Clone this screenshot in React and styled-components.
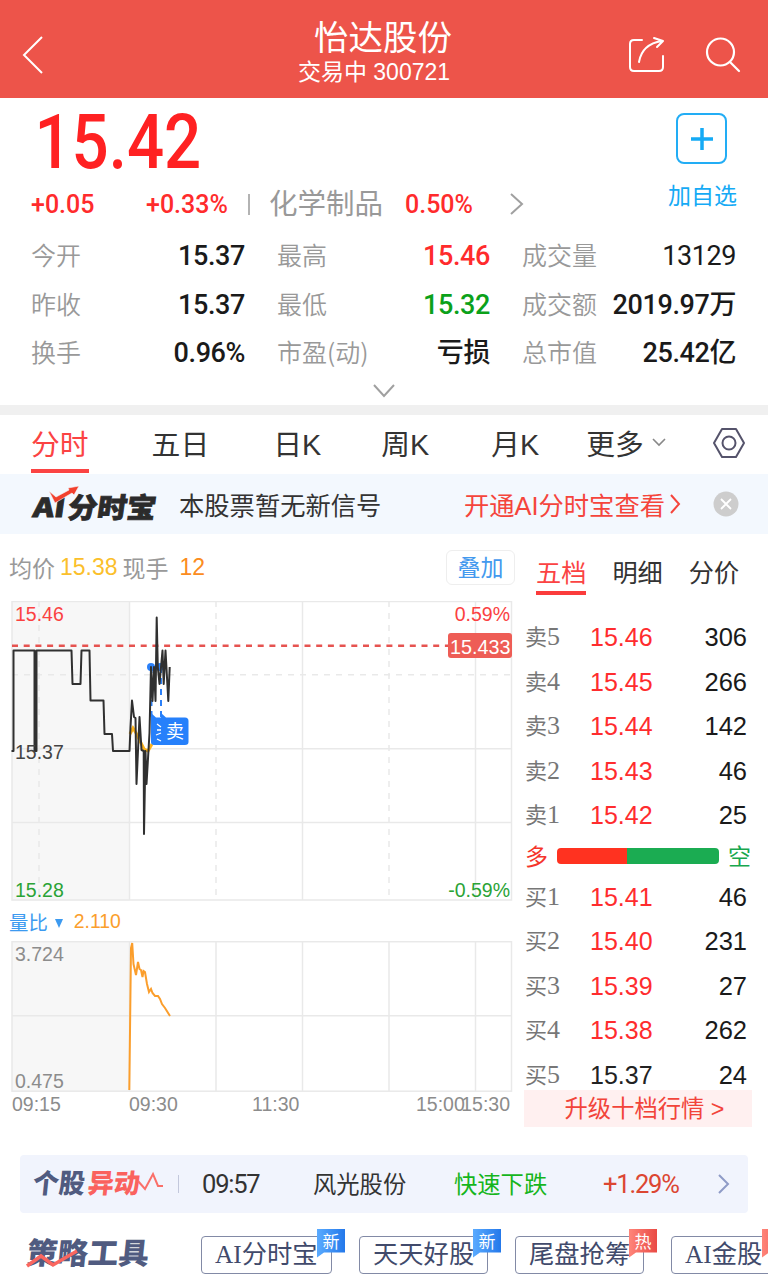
import React from "react";
import styled, { createGlobalStyle } from "styled-components";

const cjk = `"Noto Sans CJK SC", sans-serif`;
const arial = `"Liberation Sans", "Noto Sans CJK SC", sans-serif`;
const din = `Roboto, "Noto Sans CJK SC", sans-serif`;
const serif = `"Liberation Serif", "Noto Sans CJK SC", serif`;

const GlobalStyle = createGlobalStyle`
  * {
    box-sizing: border-box;
  }
  body {
    margin: 0;
    background: #ffffff;
    font-family: ${cjk};
    overflow: hidden;
  }
`;

const Page = styled.div`
  width: 768px;
  height: 1282px;
  overflow: hidden;
  background: #ffffff;
  white-space: nowrap;
`;

/* header */
const Header = styled.header`
  display: flex;
  align-items: center;
  justify-content: space-between;
  height: 98px;
  padding: 12px 27px 0 22px;
  background: #ed544a;
  color: #ffffff;
`;
const HeaderSide = styled.div`
  display: flex;
  align-items: center;
  justify-content: ${(p) => (p.$end ? "flex-end" : "flex-start")};
  gap: 39px;
  width: 150px;
`;
const Heading = styled.div`
  text-align: center;
  margin: -7px -3px 0 0;
`;
const StockName = styled.h1`
  margin: 0;
  font-size: 34.5px;
  font-weight: 400;
  line-height: 40px;
`;
const StockStatus = styled.div`
  margin-left: -18px;
  font-family: ${arial};
  font-size: 23px;
  line-height: 34px;
`;

/* quote */
const Quote = styled.section`
  display: flex;
  justify-content: space-between;
  height: 134px;
  padding: 0 31px;
`;
const Price = styled.div`
  height: 88px;
  padding-left: 4px;
  color: #ff2122;
  font-family: ${din};
  font-size: 76px;
  font-weight: 500;
  line-height: 89px;
  transform: scaleX(0.86);
  transform-origin: left;
`;
const ChangeRow = styled.div`
  display: flex;
  align-items: center;
  height: 36px;
`;
const Change = styled.div`
  width: ${(p) => p.$width}px;
  color: #ff2b2c;
  font-family: ${din};
  font-size: 25px;
  font-weight: 500;
  letter-spacing: ${(p) => p.$spacing || 0}px;
`;
const Bar = styled.div`
  width: 2px;
  height: 21px;
  margin: 0 19px 0 0;
  background: #b3b3b3;
`;
const Industry = styled.div`
  width: 136px;
  padding-bottom: 4px;
  color: #999999;
  font-size: 28.5px;
  line-height: 36px;
`;
const AddBox = styled.div`
  display: flex;
  flex-direction: column;
  align-items: center;
  padding-top: 15px;
  color: #15aaf5;
  font-size: 23px;
`;
const AddButton = styled.button`
  display: flex;
  align-items: center;
  justify-content: center;
  width: 51px;
  height: 51px;
  margin: 0 2px 13px 0;
  padding: 0;
  border: 2px solid #22adf5;
  border-radius: 8px;
  background: #ffffff;
`;

const Stats = styled.section`
  display: grid;
  grid-template-columns: 214px 213px 214px;
  column-gap: 32px;
  grid-auto-rows: 48.5px;
  padding-left: 31px;
`;
const Stat = styled.div`
  display: flex;
  align-items: center;
  justify-content: space-between;
`;
const StatLabel = styled.span`
  padding-bottom: 4px;
  color: #999999;
  font-size: 25px;
  font-weight: 350;
`;
const StatValue = styled.span`
  color: ${(p) => p.$color || "#1a1a1a"};
  font-family: ${din};
  font-size: 27px;
  font-weight: ${(p) => p.$weight || 500};
  letter-spacing: -0.4px;
  line-height: 32px;
`;
const Expand = styled.div`
  display: flex;
  justify-content: center;
  height: 27px;
  padding-top: 6px;
`;
const Divider = styled.div`
  height: 10px;
  background: #f0f0f0;
`;

/* period tabs */
const Tabs = styled.nav`
  display: flex;
  height: 59px;
  padding-left: 31px;
`;
const Tab = styled.div`
  display: flex;
  align-items: center;
  height: 58px;
  margin-right: ${(p) => p.$gap}px;
  padding: 2px 0 0;
  border-bottom: 4px solid ${(p) => (p.$active ? "#fb4343" : "transparent")};
  color: ${(p) => (p.$active ? "#fb4343" : "#333333")};
  font-family: ${arial};
  font-size: 28.8px;

  svg {
    margin-left: 8px;
  }
`;

const Banner = styled.section`
  display: flex;
  align-items: center;
  height: 60px;
  padding-left: 31px;
  background: #f3f8fe;
  font-family: ${arial};
  font-size: 25.3px;
`;
const BannerText = styled.div`
  width: 285px;
  margin-left: 21px;
  color: #333333;
`;
const BannerLink = styled.div`
  display: flex;
  align-items: center;
  gap: 5px;
  width: 249px;
  color: #f5453c;
`;

/* charts */
const Main = styled.main`
  display: flex;
  height: 621px;
`;
const ChartColumn = styled.div`
  width: 524px;
`;
const ChartHead = styled.div`
  display: flex;
  align-items: center;
  height: 67px;
  padding: 0 9px;
  color: #999999;
  font-family: ${arial};
  font-size: 23px;
`;
const HeadValue = styled.span`
  margin: 0 ${(p) => p.$right}px 0 ${(p) => p.$left}px;
  color: ${(p) => p.$color};
`;
const OverlayButton = styled.button`
  width: 69px;
  height: 35px;
  margin-left: auto;
  padding: 0 0 2px;
  border: 1.5px solid #eeeeee;
  border-radius: 6px;
  background: #ffffff;
  color: #4399ee;
  font-family: ${cjk};
  font-size: 23px;
  line-height: 30px;
`;
const Chart = styled.svg`
  display: block;
  font-family: ${arial};
  font-size: 19.5px;
`;
const VolumeHead = styled.div`
  display: flex;
  align-items: center;
  height: 40px;
  padding: 2px 0 0 9px;
  color: #3c9af0;
  font-family: ${arial};
  font-size: 19.4px;

  svg {
    margin: 3px 11px 0 7px;
  }
`;

/* order book */
const Book = styled.aside`
  width: 228px;
`;
const BookTabs = styled.div`
  display: flex;
  gap: 26px;
  height: 61px;
  padding: 16px 0 0 12px;
  margin-bottom: 21px;
`;
const BookTab = styled.div`
  height: 45px;
  border-bottom: 4px solid ${(p) => (p.$active ? "#fb3c3c" : "transparent")};
  color: ${(p) => (p.$active ? "#fb4343" : "#333333")};
  font-size: 25.2px;
  line-height: 43px;
`;
const Order = styled.div`
  display: flex;
  align-items: center;
  height: 44.5px;
  padding: 0 5px 0 1px;
  font-family: ${arial};
  font-size: 25px;
`;
const OrderLabel = styled.span`
  width: 65px;
  padding-bottom: 4px;
  color: #777777;
  font-family: ${serif};
  font-size: 22px;
`;
const LabelDigit = styled.span`
  font-size: 26px;
`;
const OrderPrice = styled.span`
  color: ${(p) => (p.$flat ? "#222222" : "#ff2c2e")};
`;
const OrderQty = styled.span`
  margin-left: auto;
  color: #1a1a1a;
  font-size: 25.5px;
`;
const Balance = styled.div`
  display: flex;
  align-items: center;
  justify-content: space-between;
  height: 37px;
  padding: 0 1px 2px;
  color: #18a74e;
  font-size: 23px;
`;
const BalanceMark = styled.span`
  padding-bottom: 2px;
  color: ${(p) => p.$color};
`;
const BalanceBar = styled.div`
  width: 162px;
  height: 16px;
  border-radius: 4px;
  background: linear-gradient(90deg, #ff3220 43%, #1bac52 43%);
`;
const Upgrade = styled.div`
  height: 37px;
  margin-top: -8px;
  padding-left: 13px;
  background: #fff0f0;
  color: #f2443a;
  font-family: ${arial};
  font-size: 23.3px;
  line-height: 39px;
  text-align: center;
`;

/* movers */
const Movers = styled.section`
  display: flex;
  align-items: center;
  width: 728px;
  height: 58px;
  margin: 0 20px;
  padding-left: 13px;
  border-radius: 4px;
  background: #f1f4fd;
`;
const Mover = styled.div`
  width: ${(p) => p.$width}px;
  padding-bottom: 2px;
  color: ${(p) => p.$color || "#333333"};
  font-size: 23.3px;
`;
const MoverNumber = styled(Mover)`
  padding-bottom: 0;
  font-family: ${din};
  font-size: 25.5px;
  font-weight: 450;
  letter-spacing: -1.2px;
`;
const MoverBar = styled.div`
  width: 1px;
  height: 18px;
  margin: 0 23px 0 14px;
  background: #c3c8dc;
`;

/* strategy tools */
const Tools = styled.section`
  display: flex;
  height: 69px;
  padding: 15px 0 0 26px;
`;
const ToolLogo = styled.div`
  flex: none;
  width: 175px;
  padding-top: 3px;
`;
const Tool = styled.div`
  position: relative;
  flex: none;
  width: ${(p) => p.$width}px;
  height: 38px;
  margin: 8px 27px 0 0;
  padding-left: 13px;
  border: 1.5px solid #828aa6;
  border-radius: 4px;
  color: #414a6b;
  font-family: ${serif};
  font-size: 25.3px;
  line-height: 34px;
`;
const Badge = styled.span`
  position: absolute;
  top: -8px;
  right: -14px;
  width: 28px;
  height: 29px;
  background: ${(p) =>
    p.$hot
      ? "linear-gradient(90deg, #ff857a, #e94a44)"
      : "linear-gradient(90deg, #5aabff, #2478ea)"};
  clip-path: polygon(0 0, 100% 0, 100% 83%, 25% 83%, 0 100%);
  color: #ffffff;
  font-family: ${cjk};
  font-size: 17px;
  line-height: 23px;
  text-align: center;
`;

const stats = [
  ["今开", "15.37"],
  ["最高", "15.46", "#ff2b2c"],
  ["成交量", "13129", "#1a1a1a", 400],
  ["昨收", "15.37"],
  ["最低", "15.32", "#0ba11a"],
  ["成交额", "2019.97万"],
  ["换手", "0.96%"],
  ["市盈(动)", "亏损"],
  ["总市值", "25.42亿"],
];

const periods = [
  ["分时", 63],
  ["五日", 64],
  ["日K", 60],
  ["周K", 62],
  ["月K", 47],
];

const sells = [
  ["5", "15.46", 306],
  ["4", "15.45", 266],
  ["3", "15.44", 142],
  ["2", "15.43", 46],
  ["1", "15.42", 25],
];

const buys = [
  ["1", "15.41", 46],
  ["2", "15.40", 231],
  ["3", "15.39", 27],
  ["4", "15.38", 262],
  ["5", "15.37", 24],
];

const tools = [
  ["AI分时宝", 131, "新"],
  ["天天好股", 129, "新"],
  ["尾盘抢筹", 129, "热"],
  ["AI金股", 106, "热"],
];

const Chevron = ({ w, h, d, color, stroke = 2 }) => (
  <svg width={w} height={h} fill="none" stroke={color} strokeWidth={stroke}>
    <path d={d} />
  </svg>
);

const ShareIcon = () => (
  <svg width="38" height="38" fill="none" stroke="#fff" strokeWidth="2" strokeLinecap="round" strokeLinejoin="round">
    <path d="M14 4H6Q2 4 2 8V31Q2 35 6 35H31Q35 35 35 31V20" />
    <path d="M11 26C13 14 21 7 34 5M26 2L35 5L29 11" />
  </svg>
);

const SearchIcon = () => (
  <svg width="36" height="38" fill="none" stroke="#fff" strokeWidth="2.2" strokeLinecap="round">
    <circle cx="15.5" cy="16" r="13.5" />
    <path d="M25 26L34 35" />
  </svg>
);

const AiLogo = () => (
  <svg width="127" height="42" viewBox="0 0 127 42" overflow="visible">
    <g
      transform="translate(1 34) skewX(-8)"
      fill="#2b2b2b"
      stroke="#2b2b2b"
      strokeWidth="0.8"
      fontFamily={cjk}
      fontWeight="900"
    >
      <text fontSize="26" textLength="32" lengthAdjust="spacingAndGlyphs">AI</text>
      <text x="35" y="1" fontSize="28" textLength="88" lengthAdjust="spacingAndGlyphs">分时宝</text>
    </g>
    <path d="M18 8L25 14L38 7L37 5L48 3L43 12L41 10L24 20Z" fill="#f2402d" stroke="#f3f8fe" strokeWidth="0.6" />
  </svg>
);

const MoversLogo = () => (
  <svg width="131" height="42" viewBox="0 0 131 42" overflow="visible">
    <g transform="translate(-1 30) skewX(-6)" fontFamily={cjk} fontWeight="900" fontSize="27">
      <text fill="#505b80" textLength="52" lengthAdjust="spacingAndGlyphs">个股</text>
      <text x="55" fill="#fa625e" textLength="52" lengthAdjust="spacingAndGlyphs">异动</text>
    </g>
    <path d="M105 18L112 26L120 11L125 23H130" fill="none" stroke="#fa6f69" strokeWidth="2" />
  </svg>
);

const ToolsLogo = () => (
  <svg width="128" height="44" viewBox="0 0 128 44" overflow="visible">
    <g transform="translate(0 33) skewX(-6)">
      <text fill="#505b80" fontFamily={cjk} fontWeight="900" fontSize="30" textLength="122" lengthAdjust="spacingAndGlyphs">
        策略工具
      </text>
    </g>
    <path d="M1 35L15 25L27 34L51 20" fill="none" stroke="#fa665f" strokeWidth="3.5" />
  </svg>
);

const PriceChart = () => (
  <Chart width="524" height="300" viewBox="0 601 524 300">
    <rect x="12" y="601.5" width="117.5" height="299" fill="#f7f7f7" />
    <g fill="none" stroke="#e9e9e9" strokeWidth="1.5">
      <rect x="12" y="601.5" width="499.5" height="298.5" />
      <path d="M129.5 601V900M302.5 601V900M475.5 601V900M12 748.7H511M12 822.5H511" />
      <path d="M39 601V900M216 601V900M389 601V900M12 674.7H511" strokeDasharray="6 6" />
    </g>
    <path d="M12 645.7H450" stroke="#e65350" strokeWidth="2.5" strokeDasharray="6 5.7" />
    <path d="M130 734L133 728L136 733L140 741L144 749L148 751L152 744" fill="none" stroke="#fdb31b" strokeWidth="3" />
    <g stroke="#2b80f8" strokeWidth="2" strokeDasharray="6 5">
      <path d="M151.5 667V718M161 667V718" />
    </g>
    <circle cx="151" cy="667" r="4" fill="#2b80f8" />
    <circle cx="160" cy="667" r="4" fill="#2b80f8" />
    <path
      d="M11.5 751H13.5V650.5H34.5V751H36.5V650.5H71.5L72.5 684H80.5L81.5 650.5H89.5L90.5 700.5H103.5L104.5 734H112L113 751H129.5L130.5 727L132 700.5L134 717L135.5 718L136.5 784L139.5 717L141.5 750L143.7 751L144 834L145.5 751L146.5 784L149.5 733L151 667L152.5 701L154 667L155.5 701L156.7 617.5L157.8 667L159.5 684L162.5 650.5L163.7 684L165.5 650.5L168.3 701L169.7 667"
      fill="none"
      stroke="#303030"
      strokeWidth="2"
      strokeLinejoin="round"
    />
    <path d="M151 722V713L156 717.5H161V713L166 717.5H185Q188.5 717.5 188.5 721V742Q188.5 745 185 745H154Q151 745 151 742Z" fill="#2680fb" />
    <path d="M157 724L161 727M157 730H161M156 735L161 733M157 739L161 741" stroke="#fff" strokeWidth="1.3" />
    <text x="166" y="738" fontSize="18" fill="#fff">卖</text>
    <text x="15" y="620.5" fill="#fb4141">15.46</text>
    <text x="15" y="759" fill="#444">15.37</text>
    <text x="15" y="897" fill="#2aa336">15.28</text>
    <text x="510" y="620.5" fill="#fb4141" textAnchor="end">0.59%</text>
    <text x="510" y="897" fill="#2aa336" textAnchor="end">-0.59%</text>
    <rect x="448" y="633" width="64" height="25" rx="3" fill="#ee5d56" />
    <text x="450" y="654" fontSize="19.8" fill="#fff">15.433</text>
  </Chart>
);

const VolumeChart = () => (
  <Chart width="524" height="180" viewBox="0 941 524 180">
    <rect x="12" y="942" width="117.5" height="149" fill="#f7f7f7" />
    <g fill="none" stroke="#e9e9e9" strokeWidth="1.5">
      <rect x="12" y="941.7" width="499.5" height="149.5" />
      <path d="M129.5 941V1091M216 941V1091M302.5 941V1091M389 941V1091M475.5 941V1091M12 1015.7H511" />
    </g>
    <path
      d="M129.3 1090L131 948L132.2 943L133.5 964L136 975L138 962L139.5 969L141 970L142.5 977L143.5 971L145 972L147 984L149 992L151 989L152.5 993L155 996H158L160 999L162 1004L165 1008L170 1016"
      fill="none"
      stroke="#fb9e2c"
      strokeWidth="2"
    />
    <g fill="#8c8c8c">
      <text x="15" y="961">3.724</text>
      <text x="15" y="1088">0.475</text>
      <text x="12" y="1111">09:15</text>
      <text x="129" y="1111">09:30</text>
      <text x="252" y="1111">11:30</text>
      <text x="416" y="1111">15:00</text>
      <text x="510" y="1111" textAnchor="end">15:30</text>
    </g>
  </Chart>
);

const OrderRow = ({ side, level, price, qty }) => (
  <Order>
    <OrderLabel>
      {side}
      <LabelDigit>{level}</LabelDigit>
    </OrderLabel>
    <OrderPrice $flat={price === "15.37"}>{price}</OrderPrice>
    <OrderQty>{qty}</OrderQty>
  </Order>
);

const App = () => (
  <Page>
    <GlobalStyle />
    <Header>
      <HeaderSide>
        <Chevron w={22} h={38} d="M20 1L2 19L20 37" color="#fff" />
      </HeaderSide>
      <Heading>
        <StockName>怡达股份</StockName>
        <StockStatus>交易中 300721</StockStatus>
      </Heading>
      <HeaderSide $end>
        <ShareIcon />
        <SearchIcon />
      </HeaderSide>
    </Header>

    <Quote>
      <div>
        <Price>15.42</Price>
        <ChangeRow>
          <Change $width={115}>+0.05</Change>
          <Change $width={102}>+0.33%</Change>
          <Bar />
          <Industry>化学制品</Industry>
          <Change $width={105}>0.50%</Change>
          <Chevron w={14} h={22} d="M1 1L12 11L1 21" color="#a0a0a0" />
        </ChangeRow>
      </div>
      <AddBox>
        <AddButton>
          <svg width="22" height="22" stroke="#15aaf5" strokeWidth="3.5">
            <path d="M11 0V22M0 11H22" />
          </svg>
        </AddButton>
        加自选
      </AddBox>
    </Quote>
    <Stats>
      {stats.map(([label, value, color, weight]) => (
        <Stat key={label}>
          <StatLabel>{label}</StatLabel>
          <StatValue $color={color} $weight={weight}>{value}</StatValue>
        </Stat>
      ))}
    </Stats>
    <Expand>
      <Chevron w={22} h={14} d="M1 1L11 12L21 1" color="#a0a0a0" />
    </Expand>
    <Divider />

    <Tabs>
      {periods.map(([name, gap], i) => (
        <Tab key={name} $gap={gap} $active={i === 0}>
          {name}
        </Tab>
      ))}
      <Tab $gap={38}>
        更多
        <Chevron w={14} h={9} d="M1 1L7 7L13 1" color="#888" stroke={1.6} />
      </Tab>
      <Tab $gap={0}>
        <svg width="34" height="32" fill="none" stroke="#55536b" strokeWidth="2">
          <path d="M10 2H24L32 16L24 30H10L2 16Z" strokeLinejoin="round" />
          <circle cx="17" cy="16" r="6.5" />
        </svg>
      </Tab>
    </Tabs>

    <Banner>
      <AiLogo />
      <BannerText>本股票暂无新信号</BannerText>
      <BannerLink>
        开通AI分时宝查看
        <Chevron w={11} h={20} d="M1 1L9 10L1 19" color="#f5453c" />
      </BannerLink>
      <svg width="26" height="26">
        <circle cx="13" cy="13" r="12.5" fill="#cdcdcd" />
        <path d="M8 8L18 18M18 8L8 18" stroke="#fff" strokeWidth="1.8" />
      </svg>
    </Banner>

    <Main>
      <ChartColumn>
        <ChartHead>
          均价
          <HeadValue $color="#fbbf2b" $left={5} $right={5}>15.38</HeadValue>
          现手
          <HeadValue $color="#fb8c20" $left={11} $right={0}>12</HeadValue>
          <OverlayButton>叠加</OverlayButton>
        </ChartHead>
        <PriceChart />
        <VolumeHead>
          量比
          <svg width="8" height="9" fill="#3c9af0">
            <path d="M0 0H8L4 9Z" />
          </svg>
          <HeadValue $color="#fb9e2c" $left={0} $right={0}>2.110</HeadValue>
        </VolumeHead>
        <VolumeChart />
      </ChartColumn>
      <Book>
        <BookTabs>
          <BookTab $active>五档</BookTab>
          <BookTab>明细</BookTab>
          <BookTab>分价</BookTab>
        </BookTabs>
        {sells.map(([level, price, qty]) => (
          <OrderRow key={level} side="卖" level={level} price={price} qty={qty} />
        ))}
        <Balance>
          <BalanceMark $color="#f5352b">多</BalanceMark>
          <BalanceBar />
          <BalanceMark $color="#18a74e">空</BalanceMark>
        </Balance>
        {buys.map(([level, price, qty]) => (
          <OrderRow key={level} side="买" level={level} price={price} qty={qty} />
        ))}
        <Upgrade>升级十档行情 &gt;</Upgrade>
      </Book>
    </Main>

    <Movers>
      <MoversLogo />
      <MoverBar />
      <MoverNumber $width={111}>09:57</MoverNumber>
      <Mover $width={141}>风光股份</Mover>
      <Mover $width={149} $color="#15b51c">快速下跌</Mover>
      <MoverNumber $width={115} $color="#dc4632">+1.29%</MoverNumber>
      <Chevron w={12} h={20} d="M1 1L10 10L1 19" color="#8f9bc7" />
    </Movers>
    <Tools>
      <ToolLogo>
        <ToolsLogo />
      </ToolLogo>
      {tools.map(([name, width, badge]) => (
        <Tool key={name} $width={width}>
          {name}
          <Badge $hot={badge === "热"}>{badge}</Badge>
        </Tool>
      ))}
    </Tools>
  </Page>
);

export default App;
